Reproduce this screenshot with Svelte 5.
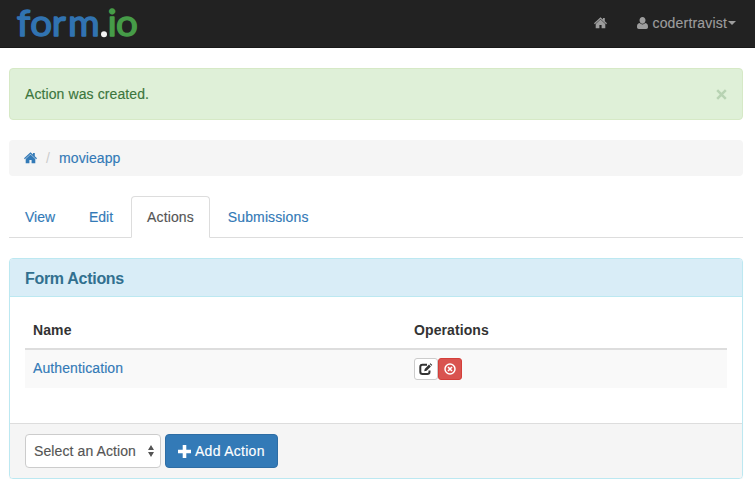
<script>
  const tabs = ['View', 'Edit', 'Actions', 'Submissions'];
  const active = 'Actions';
  const actions = ['Authentication'];
</script>

{#snippet house()}
  <svg class="house" width="13" height="12" viewBox="0 0 13 12" fill="currentColor">
    <path d="M6.500.2 9 2.500V1h1.800v3.200L13 6.300l-.8.900L6.500 2 .8 7.200 0 6.300z" />
    <path d="M6.500 2.600 11.300 7V11.200H7.600V7.900H5.400V11.200H1.700V7z" />
  </svg>
{/snippet}

<nav>
  <svg class="logo" width="130" height="47" viewBox="0 0 130 47" role="img" aria-label="form.io">
    <g class="blue" transform="scale(1.07 1)"><text x="0.8 13.300 33.400 48.500" y="36.400">form</text></g>
    <circle cx="88" cy="34.300" r="3" fill="#f4f4f4" />
    <g class="green" transform="scale(1.07 1)"><text x="85.400 93.400" y="36.400">io</text></g>
  </svg>
  <div class="navlinks">
    <a href="#home" aria-label="Home">{@render house()}</a>
    <a class="user" href="#user">
      <svg width="11" height="12" viewBox="0.500 0 11 12" fill="currentColor">
        <path d="M6 0C7.800 0 9 1.400 9 3.200S7.700 6.700 6 6.700 3 5 3 3.200 4.200 0 6 0zM3.200 6.100C4 7 5 7.500 6 7.500S8 7 8.800 6.100C11 6.300 11.500 8 11.500 10 11.500 11.200 10.800 12 9.700 12H2.300C1.200 12 .5 11.200.5 10 .5 8 1 6.300 3.200 6.100z" />
      </svg>
      <span>codertravist</span><i class="caret"></i>
    </a>
  </div>
</nav>

<main>
  <div class="alert">
    <span>Action was created.</span>
    <button class="close" aria-label="Close">
      <svg width="11" height="11" viewBox="0 0 11 11"><path d="M1.200 1.200 9.800 9.800M9.800 1.200 1.200 9.800" stroke="currentColor" stroke-width="2.500" /></svg>
    </button>
  </div>

  <div class="breadcrumb">
    <a href="#home" aria-label="Home">{@render house()}</a>
    <span class="slash">/</span>
    <a href="#movieapp">movieapp</a>
  </div>

  <ul class="tabs">
    {#each tabs as tab}
      <li class:active={tab === active}><a href="#{tab}">{tab}</a></li>
    {/each}
  </ul>

  <section class="panel">
    <h3>Form Actions</h3>
    <div class="body">
      <table>
        <thead><tr><th class="name">Name</th><th>Operations</th></tr></thead>
        <tbody>
          {#each actions as action}
            <tr>
              <td class="label"><a href="#{action}">{action}</a></td>
              <td>
                <div class="ops">
                  <button class="edit" aria-label="Edit">
                    <svg width="14" height="12" viewBox="0 0 14 12">
                      <path d="M8 1.800H3.500Q1.300 1.800 1.300 4V8.800Q1.300 11 3.500 11H8.300Q10.500 11 10.500 8.800V7.500" fill="none" stroke="currentColor" stroke-width="2" />
                      <path d="M5.200 8.300 5.700 5.900 10 1.600 11.900 3.500 7.600 7.800zM10.700 1 11.500.2 13.300 2 12.500 2.800z" fill="currentColor" />
                    </svg>
                  </button>
                  <button class="delete" aria-label="Delete">
                    <svg width="12" height="12" viewBox="0 0 12 12" fill="none" stroke="currentColor">
                      <circle cx="6" cy="6" r="5" stroke-width="1.500" />
                      <path d="M4 4 8 8M8 4 4 8" stroke-width="1.600" />
                    </svg>
                  </button>
                </div>
              </td>
            </tr>
          {/each}
        </tbody>
      </table>
    </div>
    <footer>
      <button class="select">
        <span>Select an Action</span>
        <svg width="6" height="12" viewBox="0 0 6 12" fill="currentColor"><path d="M3 0 6 5H0zM0 7H6L3 12z" /></svg>
      </button>
      <button class="add">
        <svg width="13" height="13" viewBox="0 0 13 13"><path d="M6.500 0V13M0 6.500H13" stroke="currentColor" stroke-width="3.600" /></svg>
        <span>Add Action</span>
      </button>
    </footer>
  </section>
</main>

<style>
  :global(body) { margin: 0; background: #fff; }
  :global(#app) { font: 14px/20px "Liberation Sans", Arial, sans-serif; letter-spacing: .1px; color: #333; }
  :global(#app *) { box-sizing: border-box; }
  a { color: #337ab7; text-decoration: none; }
  a, .alert span, .select, .add { -webkit-text-stroke: .15px currentColor; }
  button { font: inherit; letter-spacing: inherit; padding: 0; margin: 0; }
  svg { display: block; flex: none; }
  nav { height: 48px; background: #222; border-bottom: 1px solid #191919; display: flex; justify-content: space-between; padding: 0 19px 0 16px; }
  .logo { font: 36px/1 Lato, sans-serif; letter-spacing: 0; overflow: visible; }
  .logo text { stroke-width: 1.400px; stroke-linejoin: round; }
  .blue text { fill: #3173b1; stroke: #3173b1; }
  .green text { fill: #469c48; stroke: #469c48; }
  .navlinks { display: flex; height: 46px; align-items: center; gap: 30px; }
  .navlinks a { color: #9d9d9d; display: flex; align-items: center; }
  .user span { margin-left: 4px; letter-spacing: .18px; }
  .caret { margin-left: 1px; border: 4px solid transparent; border-top-color: currentColor; border-bottom: 0; }
  main { padding: 20px 12px 0 9px; }
  .alert { height: 52px; padding: 0 15px; border: 1px solid #d6e9c6; border-radius: 4px; background: #dff0d8; color: #3c763d; display: flex; align-items: center; justify-content: space-between; }
  .close { border: 0; background: none; color: #b8d3b3; }
  .breadcrumb { margin-top: 20px; height: 36px; padding: 0 15px; border-radius: 4px; background: #f5f5f5; display: flex; align-items: center; }
  .slash { color: #ccc; margin: 0 9px; }
  .tabs { list-style: none; margin: 20px 0 0; padding: 0; height: 42px; border-bottom: 1px solid #ddd; display: flex; gap: 2px; letter-spacing: .12px; }
  .tabs li { height: 42px; padding: 10px 15px; border: 1px solid transparent; border-radius: 4px 4px 0 0; }
  .tabs li:nth-child(-n+2) { letter-spacing: -.02px; }
  .tabs .active { border-color: #ddd #ddd #fff; background: #fff; }
  .active a { color: #555; }
  .panel { margin-top: 20px; height: 221px; border: 1px solid #bce8f1; border-radius: 4px; overflow: hidden; display: flex; flex-direction: column; box-shadow: 0 1px 1px rgba(0,0,0,.05); }
  h3 { margin: 0; height: 38px; padding: 0 15px; font-size: 16px; letter-spacing: -.3px; line-height: 39px; color: #31708f; background: #d9edf7; border-bottom: 1px solid #bce8f1; }
  .body { flex: 1; padding: 15px 15px 0; }
  table { width: 100%; border-collapse: separate; border-spacing: 0; table-layout: fixed; }
  th { height: 38px; padding: 0 8px; text-align: left; border-bottom: 2px solid #ddd; }
  .name { width: 381px; }
  td { height: 38px; padding: 0 8px; background: #f9f9f9; }
  .label { padding-bottom: 2px; }
  .ops { display: flex; }
  .ops button { width: 24px; height: 22px; border: 1px solid #ccc; border-radius: 3px; display: flex; align-items: center; justify-content: center; background: #fff; color: #333; }
  .ops .delete { background: #d9534f; border-color: #d43f3a; color: #fff; }
  footer { height: 55px; border-top: 1px solid #ddd; background: #f5f5f5; padding: 10px 15px; display: flex; gap: 4px; }
  .select { width: 136px; height: 34px; border: 1px solid #ccc; border-radius: 4px; background: #fff; color: #555; padding: 0 6px 0 8px; display: flex; align-items: center; justify-content: space-between; }
  .add { width: 113px; height: 34px; border: 1px solid #2e6da4; border-radius: 4px; background: #337ab7; color: #fff; padding: 0 12px; display: flex; align-items: center; gap: 4px; letter-spacing: .28px; }
</style>
